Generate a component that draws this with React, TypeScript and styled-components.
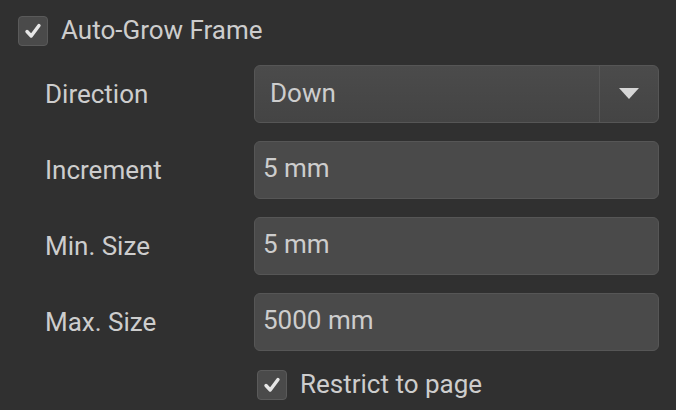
import styled, { createGlobalStyle } from 'styled-components';

const GlobalStyle = createGlobalStyle`
   html, body {
      margin: 0;
      background: #303030;
   }
   body {
      font-family: Roboto, 'Liberation Sans', sans-serif;
      color: #cdcdcd;
   }
`;

const CheckIcon = () => (
   <svg width="20" height="20" viewBox="0 0 20 20">
      <path
         d="M4 10.5 L8.2 15 L16 4.5"
         fill="none"
         stroke="#e6e6e6"
         strokeWidth="3.4"
         strokeLinecap="round"
         strokeLinejoin="round"
      />
   </svg>
);

const rows = [
   { label: 'Increment', value: '5 mm' },
   { label: 'Min. Size', value: '5 mm' },
   { label: 'Max. Size', value: '5000 mm' },
];

const App = () => {
   return (
      <>
         <GlobalStyle />
         <Panel>
            <CheckRow>
               <CheckBox>
                  <CheckIcon />
               </CheckBox>
               <CheckText>Auto-Grow Frame</CheckText>
            </CheckRow>
            <Form>
               <Label>Direction</Label>
               <Select>
                  <SelectValue>Down</SelectValue>
                  <SelectArrow>
                     <svg width="20" height="12" viewBox="0 0 20 12">
                        <path d="M0 0 H20 L10 11 Z" fill="#d6d6d6" />
                     </svg>
                  </SelectArrow>
               </Select>
               {rows.map(row => (
                  <Row key={row.label}>
                     <Label>{row.label}</Label>
                     <Field>{row.value}</Field>
                  </Row>
               ))}
               <CheckRow>
                  <CheckBox>
                     <CheckIcon />
                  </CheckBox>
                  <CheckText>Restrict to page</CheckText>
               </CheckRow>
            </Form>
         </Panel>
      </>
   );
};
export default App;

const Panel = styled.div`
   width: 676px;
   height: 410px;
   box-sizing: border-box;
   padding: 16px 17px 0 18px;
   display: flex;
   flex-direction: column;
   gap: 19px;
`;
const CheckRow = styled.div`
   display: flex;
   align-items: center;
   gap: 13px;
   height: 30px;
`;
const CheckBox = styled.div`
   width: 30px;
   height: 30px;
   box-sizing: border-box;
   border: 1px solid #5a5a5a;
   border-radius: 4px;
   background: #4a4a4a;
   display: flex;
   align-items: center;
   justify-content: center;
`;
const CheckText = styled.span`
   font-size: 26px;
   line-height: 30px;
   margin-top: -3px;
`;
const Form = styled.div`
   display: grid;
   grid-template-columns: 209px 405px;
   row-gap: 18px;
   margin-left: 27px;
   & > ${CheckRow} {
      grid-column: 2;
      margin-left: 3px;
      margin-top: 1px;
   }
`;
const Row = styled.div`
   display: contents;
`;
const Label = styled.div`
   font-size: 26px;
   display: flex;
   align-items: center;
   height: 58px;
   padding-bottom: 1px;
   box-sizing: border-box;
`;
const Select = styled.div`
   height: 58px;
   box-sizing: border-box;
   border: 1.5px solid #565656;
   border-radius: 6px;
   background: linear-gradient(#4b4b4b, #444444);
   display: flex;
`;
const SelectValue = styled.div`
   flex: 1;
   font-size: 26px;
   display: flex;
   align-items: center;
   padding-left: 15px;
   padding-bottom: 2px;
`;
const SelectArrow = styled.div`
   width: 58px;
   border-left: 1.5px solid #565656;
   display: flex;
   align-items: center;
   justify-content: center;
`;
const Field = styled.div`
   height: 58px;
   box-sizing: border-box;
   border: 1.5px solid #565656;
   border-radius: 6px;
   background: #4a4a4a;
   font-size: 26px;
   display: flex;
   align-items: center;
   padding-left: 8px;
   padding-bottom: 4px;
`;
